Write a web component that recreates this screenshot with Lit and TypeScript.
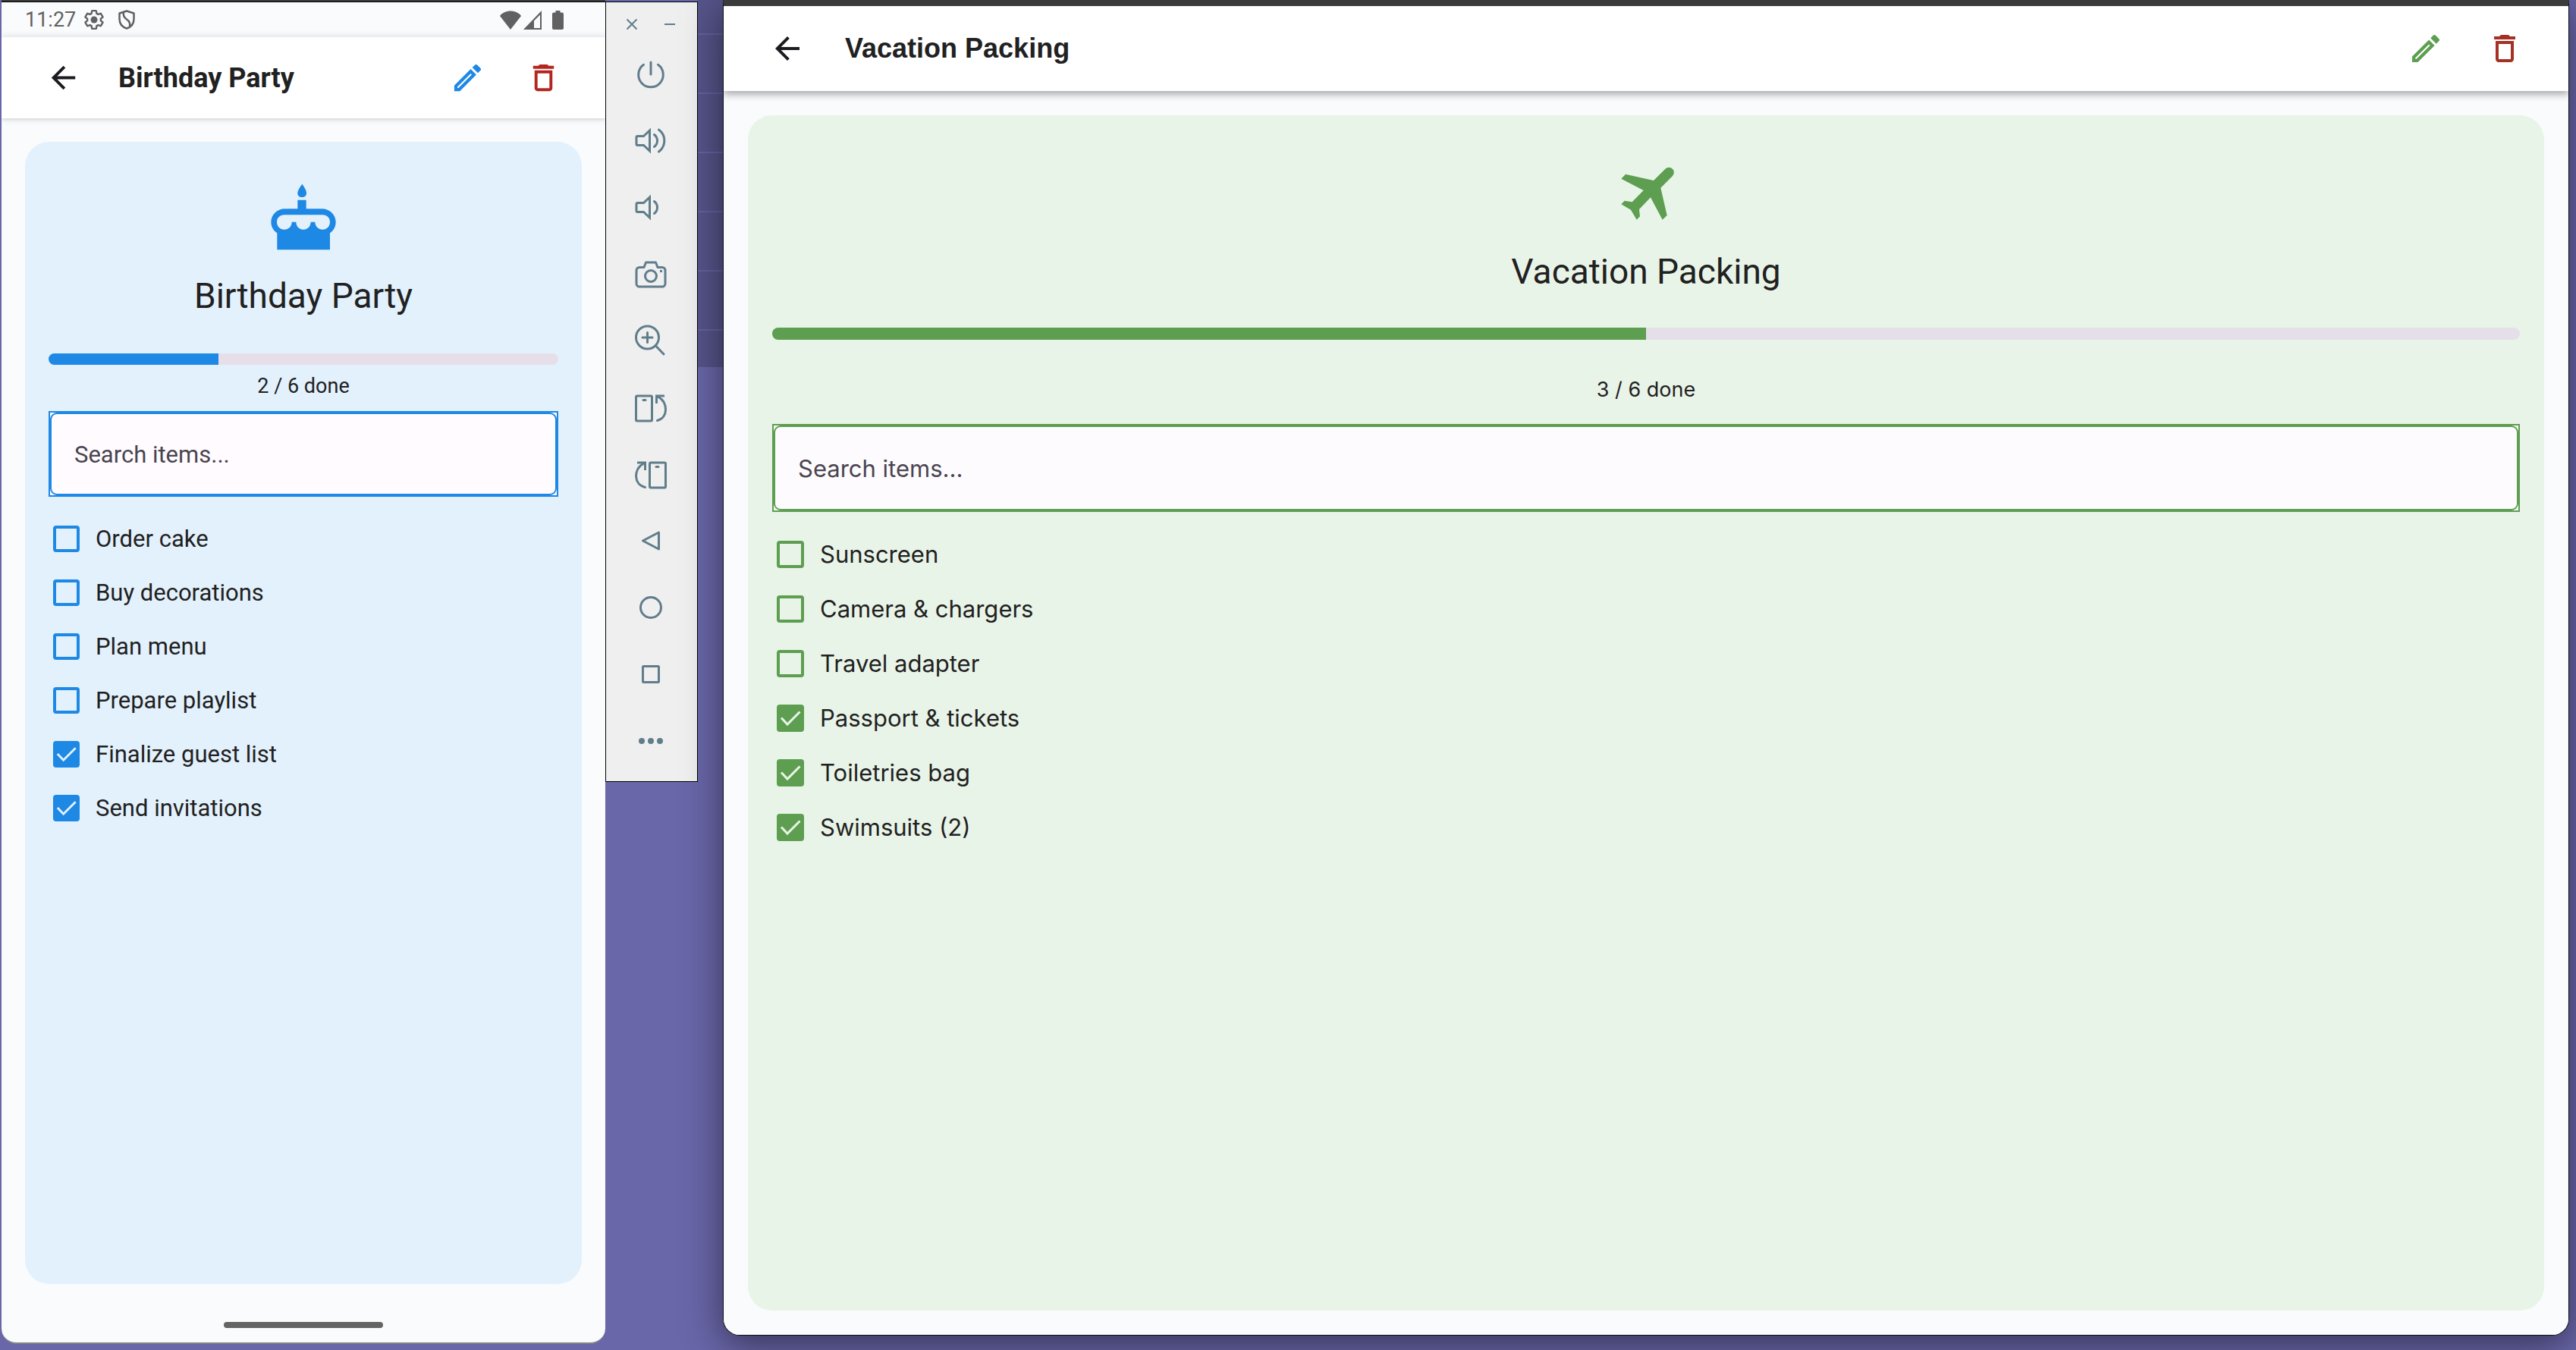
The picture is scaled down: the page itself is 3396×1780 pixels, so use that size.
import { LitElement, html, css, svg, nothing } from "lit";
import { customElement, property } from "lit/decorators.js";

interface Item {
  name: string;
  done: boolean;
}

const backIcon = svg`<path d="M20 11H7.83l5.59-5.59L12 4l-8 8 8 8 1.41-1.41L7.83 13H20v-2z" />`;
const editIcon = svg`<path d="M14.06 9.22l.72.72L5.82 18.9H5.1v-.72l8.96-8.96M17.66 3c-.25 0-.51.1-.7.29l-1.83 1.83 3.75 3.75 1.83-1.83c.39-.39.39-1.02 0-1.41l-2.34-2.34c-.2-.2-.45-.29-.71-.29zm-3.6 3.19L3 17.25V21h3.75L17.81 9.94l-3.75-3.75z" />`;
const deleteIcon = svg`<path d="M16 9v10H8V9h8m-1.5-6h-5l-1 1H5v2h14V4h-3.5l-1-1zM18 7H6v12c0 1.1.9 2 2 2h8c1.1 0 2-.9 2-2V7z" />`;

const cakeIcon = html`<svg class="cake" viewBox="45 19 270 270" aria-hidden="true">
  <path d="M175 24C184 36 192 50 192 60C192 70 185 76 174 76C164 76 157 70 157 60C157 50 166 36 175 24Z" />
  <path
    fill-rule="evenodd"
    d="M157 122V87H191V122H254C284 122 308 146 308 174C308 192 299 208 285 218V284H76V218C61 208 52 192 52 174C52 146 76 122 106 122ZM104 146C88 146 75 158 75 174C75 191 88 204 104 204C121 204 134 191 134 174H151C151 191 164 204 180 204C196 204 209 191 209 174H226C226 191 240 204 256 204C272 204 285 191 285 174C285 158 272 146 257 146Z"
  />
</svg>`;

const planeIcon = html`<svg class="plane" viewBox="546 118 228 216" aria-hidden="true">
  <path
    d="M579 150L690 175L736 129C744 121 757 121 765 129C772 136 772 149 765 157L718 204L743 313L725 330L678 242L633 289L636 317L623 330L600 291L562 269L575 255L605 260L650 214L562 168Z"
  />
</svg>`;

@customElement("checklist-screen")
class ChecklistScreen extends LitElement {
  static styles = css`
    :host {
      display: flex;
      flex-direction: column;
      flex: 1;
      color: #212121;
      background: #f9fbfd;
    }
    :host([theme="blue"]) {
      --accent: #1e88e5;
      --tint: #e3f1fd;
      --track: #e6dfea;
      --field: #fffbff;
      --font: Roboto, sans-serif;
      --title-font: Roboto, sans-serif;
      --gutter: 31px;
      --icon: 47px;
      --header: 107px;
      --edge: 58px;
      --title-gap: 49px;
      --action-gap: 53px;
      --hero-top: 54px;
      --name-top: 31px;
      --name-size: 46px;
      --bar-top: 48px;
      --bar: 15px;
      --count-top: 12px;
      --count-bottom: 17px;
      --search: 113px;
      --list-top: 20px;
      --row: 71px;
      --box: 35px;
      --header-shadow: 0 0 10px rgba(0, 0, 0, 0.14), 0 2px 4px rgba(0, 0, 0, 0.08);
    }
    :host([theme="green"]) {
      --accent: #5d9e51;
      --tint: #e9f4e8;
      --track: #e5dfea;
      --field: #fdfbfe;
      --font: Inter, sans-serif;
      --title-font: "Liberation Sans", Arial, sans-serif;
      --gutter: 32px;
      --icon: 48px;
      --header: 112px;
      --edge: 60px;
      --title-gap: 52px;
      --action-gap: 56px;
      --hero-top: 67px;
      --name-top: 39px;
      --name-size: 46px;
      --bar-top: 46px;
      --bar: 16px;
      --count-top: 50px;
      --count-bottom: 29px;
      --search: 116px;
      --list-top: 20px;
      --row: 72px;
      --box: 36px;
      --header-shadow: 0 4px 10px rgba(0, 0, 0, 0.35);
    }
    * {
      box-sizing: border-box;
    }
    .header {
      display: flex;
      align-items: center;
      height: var(--header);
      padding: 0 var(--edge);
      background: #fff;
      box-shadow: var(--header-shadow);
    }
    .header-title {
      flex: 1;
      margin: 0 0 0 var(--title-gap);
      font: 700 36px/44px var(--title-font);
    }
    .actions {
      display: flex;
      gap: var(--action-gap);
    }
    .icon-button {
      display: block;
      width: var(--icon);
      height: var(--icon);
      padding: 0;
      border: 0;
      background: none;
      color: #1d1b20;
      cursor: pointer;
    }
    .icon-button.edit {
      color: var(--accent);
    }
    .icon-button.delete {
      color: #b3261e;
    }
    :host([theme="green"]) .icon-button.delete {
      color: #a53125;
    }
    svg {
      display: block;
      fill: currentColor;
    }
    .icon-button svg {
      width: 100%;
      height: 100%;
    }
    .card {
      flex: 1;
      display: flex;
      flex-direction: column;
      margin: var(--gutter);
      padding: var(--hero-top) var(--gutter) var(--gutter);
      border-radius: 32px;
      background: var(--tint);
    }
    :host([theme="blue"]) .card {
      margin-bottom: 0;
    }
    .hero {
      display: flex;
      justify-content: center;
      color: var(--accent);
    }
    .cake {
      width: 90px;
      height: 90px;
    }
    .plane {
      width: 76px;
      height: 72px;
    }
    .name {
      margin: var(--name-top) 0 var(--bar-top);
      font: 400 var(--name-size) / 56px Roboto, sans-serif;
      text-align: center;
    }
    .bar {
      height: var(--bar);
      border-radius: 8px;
      overflow: hidden;
      background: var(--track);
    }
    .fill {
      height: 100%;
      background: var(--accent);
    }
    .count {
      margin: var(--count-top) 0 var(--count-bottom);
      font: 400 27px/32px var(--font);
      text-align: center;
    }
    .search {
      display: flex;
      height: var(--search);
      border: 2px solid var(--accent);
      background: var(--field);
    }
    .search-input {
      flex: 1;
      min-width: 0;
      padding: 2px 30px 0;
      border: 2px solid var(--accent);
      border-radius: 9px;
      outline: 0;
      background: var(--field);
      color: #212121;
      font: 400 31px/40px var(--font);
    }
    .search-input::placeholder {
      color: #49454f;
      opacity: 1;
    }
    .list {
      margin: var(--list-top) 0 0;
      padding: 0 0 0 6px;
      list-style: none;
    }
    .row {
      display: flex;
      align-items: center;
      gap: 21px;
      height: var(--row);
      font: 400 31px/40px var(--font);
    }
    .tick {
      display: grid;
      width: var(--box);
      height: var(--box);
    }
    .box,
    .mark {
      grid-area: 1 / 1;
      width: 100%;
      height: 100%;
    }
    .box {
      appearance: none;
      margin: 0;
      border: 4px solid var(--accent);
      border-radius: 4px;
    }
    .box:checked {
      background: var(--accent);
    }
    .mark {
      fill: none;
      stroke: var(--tint);
      stroke-width: 3;
      pointer-events: none;
    }
  `;

  @property() theme = "blue";
  @property() name = "";
  @property({ attribute: false }) items: Item[] = [];

  private action(kind: string, label: string, icon: unknown) {
    return html`<button class="icon-button ${kind}" type="button" aria-label=${label}>
      <svg viewBox="0 0 24 24" aria-hidden="true">${icon}</svg>
    </button>`;
  }

  render() {
    const done = this.items.filter((item) => item.done).length;
    const total = this.items.length;
    return html`
      <header class="header">
        ${this.action("back", "Back", backIcon)}
        <h1 class="header-title">${this.name}</h1>
        <div class="actions">
          ${this.action("edit", "Edit list", editIcon)} ${this.action("delete", "Delete list", deleteIcon)}
        </div>
      </header>
      <main class="card">
        <div class="hero">${this.theme === "blue" ? cakeIcon : planeIcon}</div>
        <h2 class="name">${this.name}</h2>
        <div
          class="bar"
          role="progressbar"
          aria-label="Items done"
          aria-valuemin="0"
          aria-valuemax=${total}
          aria-valuenow=${done}
        >
          <div class="fill" style="width:${(done / total) * 100}%"></div>
        </div>
        <p class="count">${done} / ${total} done</p>
        <div class="search">
          <input class="search-input" type="text" placeholder="Search items..." aria-label="Search items" />
        </div>
        <ul class="list">
          ${this.items.map(
            (item, i) => html`<li class="row">
              <span class="tick">
                <input class="box" type="checkbox" id="item-${i}" .checked=${item.done} />
                ${item.done
                  ? html`<svg class="mark" viewBox="0 0 36 36" aria-hidden="true"><path d="M6 17.5L14 26L30.5 9.5" /></svg>`
                  : nothing}
              </span>
              <label for="item-${i}">${item.name}</label>
            </li>`
          )}
        </ul>
      </main>
    `;
  }
}

@customElement("emulator-rail")
class EmulatorRail extends LitElement {
  static styles = css`
    :host {
      display: block;
      box-sizing: border-box;
      padding: 0 2px 9px 0;
      border: 1px solid #000;
      background: #efefef;
      color: #607d8b;
    }
    * {
      box-sizing: border-box;
    }
    .window-buttons {
      display: flex;
      justify-content: center;
      gap: 22px;
      height: 50px;
      padding-top: 15px;
    }
    .tools {
      display: flex;
      flex-direction: column;
      align-items: center;
    }
    button {
      display: grid;
      place-items: center;
      padding: 0;
      border: 0;
      background: none;
      color: inherit;
      cursor: pointer;
    }
    .small {
      width: 28px;
      height: 28px;
    }
    .tool {
      width: 100%;
      height: 88px;
    }
    svg {
      display: block;
      fill: none;
      stroke: currentColor;
      stroke-width: 3;
      stroke-linecap: round;
    }
    .small svg {
      width: 16px;
      height: 16px;
      stroke-width: 2;
      stroke-linecap: butt;
    }
    .tool svg {
      width: 48px;
      height: 48px;
    }
    .solid {
      fill: currentColor;
      stroke: none;
    }
  `;

  private tools: [string, unknown][] = [
    ["Power", svg`<path d="M14.5 12.3A16.3 16.3 0 1 0 33.5 12.3M24 9V25" />`],
    [
      "Volume up",
      svg`<path d="M5 20a1.500 1.500 0 0 1 1.500-1.500H14.500L22.500 11V38L14.500 30.500H6.500A1.500 1.500 0 0 1 5 29Z M28.500 16.500a10 10 0 0 1 0 16M34.500 10a18 18 0 0 1 0 29" />`,
    ],
    [
      "Volume down",
      svg`<path d="M5 20a1.500 1.500 0 0 1 1.500-1.500H14.500L22.500 11V38L14.500 30.500H6.500A1.500 1.500 0 0 1 5 29Z M28.500 16.500a10 10 0 0 1 0 16" />`,
    ],
    [
      "Take screenshot",
      svg`<path stroke-linejoin="round" d="M9 15.500h6l2.500-6.500h13L33 15.500h6a4 4 0 0 1 4 4V37a4 4 0 0 1-4 4H9a4 4 0 0 1-4-4V19.500a4 4 0 0 1 4-4Z" /><circle cx="24" cy="27" r="7.500" /><path class="solid" d="M36 19h3v3h-3z" />`,
    ],
    ["Zoom", svg`<circle cx="19.500" cy="20" r="15" /><path d="M19.500 13.500v13M13 20h13M31 31.500L41 42" />`],
    [
      "Rotate left",
      svg`<rect x="4.500" y="9" width="21" height="33" rx="1.500" /><path d="M14 14.500h3M32.500 41.500C47 38 47 17 34 10.500" /><path stroke-linecap="butt" d="M42 9H31.500V19" />`,
    ],
    [
      "Rotate right",
      svg`<rect x="22.500" y="9" width="21" height="33" rx="1.500" /><path d="M31 14.500h3M16.500 41.500C1 38 1 17 14 10.500" /><path stroke-linecap="butt" d="M6 9H16.500V19" />`,
    ],
    ["Back", svg`<path stroke-linejoin="round" d="M13.500 24L34.500 13V35Z" />`],
    ["Home", svg`<circle cx="24" cy="24" r="13.500" />`],
    ["Overview", svg`<rect x="13.500" y="13.500" width="21" height="21" rx="1" />`],
    [
      "More",
      svg`<g class="solid"><circle cx="12" cy="24" r="4" /><circle cx="24" cy="24" r="4" /><circle cx="36" cy="24" r="4" /></g>`,
    ],
  ];

  render() {
    return html`
      <div class="window-buttons">
        <button class="small" type="button" aria-label="Close">
          <svg viewBox="0 0 16 16" aria-hidden="true"><path d="M1.500 1.500l13 13M14.500 1.500l-13 13" /></svg>
        </button>
        <button class="small" type="button" aria-label="Minimize">
          <svg viewBox="0 0 16 16" aria-hidden="true"><path d="M1 8h14" /></svg>
        </button>
      </div>
      <div class="tools">
        ${this.tools.map(
          ([label, icon]) => html`<button class="tool" type="button" aria-label=${label}>
            <svg viewBox="0 0 48 48" aria-hidden="true">${icon}</svg>
          </button>`
        )}
      </div>
    `;
  }
}

@customElement("app-root")
class AppRoot extends LitElement {
  static styles = css`
    :host {
      display: block;
    }
    * {
      box-sizing: border-box;
    }
    .desktop {
      display: grid;
      grid-template-columns: minmax(0, 796fr) 122px 33px minmax(0, 2434fr);
      min-height: 100vh;
      padding: 0 9px 0 2px;
      overflow: hidden;
      background: #6966a9;
    }
    .phone {
      display: flex;
      flex-direction: column;
      margin-bottom: 8px;
      border-top: 2px solid #3b3b3b;
      border-bottom: 2px solid #858585;
      border-radius: 0 0 20px 20px;
      overflow: hidden;
      background: #f9fbfd;
    }
    .status {
      display: flex;
      align-items: center;
      height: 47px;
      padding: 0 55px 0 31px;
      border-top: 1px solid #000;
      color: #616161;
      font: 400 27px/32px Roboto, sans-serif;
    }
    .status svg {
      display: block;
      fill: currentColor;
    }
    .notices {
      display: flex;
      align-items: center;
      flex: 1;
      gap: 19px;
      margin-left: 11px;
    }
    .gear {
      width: 26px;
      height: 26px;
    }
    .shield {
      width: 22px;
      height: 26px;
    }
    .wifi {
      width: 28px;
      height: 25px;
    }
    .signal {
      width: 24px;
      height: 25px;
      margin: 0 14px 0 3px;
    }
    .battery {
      width: 15px;
      height: 25px;
    }
    .home-area {
      display: flex;
      justify-content: center;
      height: 77px;
      padding-top: 50px;
    }
    .home-bar {
      width: 210px;
      height: 8px;
      border-radius: 4px;
      background: #646464;
    }
    .rail {
      align-self: start;
      margin-top: 2px;
    }
    .wall {
      height: 484px;
      background: linear-gradient(#56548a 76px, #6562a0 76px) 0 -32px / 100% 78px;
    }
    .window {
      display: flex;
      flex-direction: column;
      margin-bottom: 19px;
      border: 1px solid #0c0c14;
      border-top: 8px solid #3b3b3b;
      border-radius: 0 0 22px 22px;
      overflow: hidden;
      background: #f9fbfd;
      box-shadow: 0 12px 50px rgba(0, 0, 0, 0.5);
    }
  `;

  private party: Item[] = [
    { name: "Order cake", done: false },
    { name: "Buy decorations", done: false },
    { name: "Plan menu", done: false },
    { name: "Prepare playlist", done: false },
    { name: "Finalize guest list", done: true },
    { name: "Send invitations", done: true },
  ];

  private packing: Item[] = [
    { name: "Sunscreen", done: false },
    { name: "Camera & chargers", done: false },
    { name: "Travel adapter", done: false },
    { name: "Passport & tickets", done: true },
    { name: "Toiletries bag", done: true },
    { name: "Swimsuits (2)", done: true },
  ];

  render() {
    return html`
      <div class="desktop">
        <section class="phone">
          <div class="status">
            <span>11:27</span>
            <div class="notices">
              <svg class="gear" viewBox="1 1 22 22" aria-hidden="true">
                <path
                  fill="none"
                  stroke="currentColor"
                  stroke-width="2"
                  d="M19.43 12.98c.04-.32.07-.64.07-.98s-.03-.66-.07-.98l2.11-1.65c.19-.15.24-.42.12-.64l-2-3.46c-.09-.16-.26-.25-.44-.25-.06 0-.12.01-.17.03l-2.49 1c-.52-.4-1.08-.73-1.69-.98l-.38-2.65C14.46 2.18 14.25 2 14 2h-4c-.25 0-.46.18-.49.42l-.38 2.65c-.61.25-1.17.59-1.69.98l-2.49-1c-.06-.02-.12-.03-.18-.03-.17 0-.34.09-.43.25l-2 3.46c-.13.22-.07.49.12.64l2.11 1.65c-.04.32-.07.65-.07.98s.03.66.07.98l-2.11 1.65c-.19.15-.24.42-.12.64l2 3.46c.09.16.26.25.44.25.06 0 .12-.01.17-.03l2.49-1c.52.4 1.08.73 1.69.98l.38 2.65c.03.24.24.42.49.42h4c.25 0 .46-.18.49-.42l.38-2.65c.61-.25 1.17-.59 1.69-.98l2.49 1c.06.02.12.03.18.03.17 0 .34-.09.43-.25l2-3.46c.12-.22.07-.49-.12-.64l-2.11-1.65z"
                />
                <circle cx="12" cy="12" r="3.800" />
              </svg>
              <svg class="shield" viewBox="0 0 22 26" aria-hidden="true">
                <path
                  fill="none"
                  stroke="currentColor"
                  stroke-width="2.500"
                  stroke-linejoin="round"
                  d="M11 1.500L20.500 4.500V12C20.500 18 17 22.500 11 24.500C5 22.500 1.500 18 1.500 12V4.500ZM7 3C6 8 8 10.500 11 12.500C15 15 16 18 15 22.500"
                />
              </svg>
            </div>
            <svg class="wifi" viewBox="0 0 28 25" aria-hidden="true">
              <path d="M14 25L0 7C3 3 8 .5 14 .5S25 3 28 7Z" />
            </svg>
            <svg class="signal" viewBox="0 0 24 25" aria-hidden="true">
              <path fill-rule="evenodd" d="M0 25L24 0V25ZM14 13.500V23H22V5.500Z" />
            </svg>
            <svg class="battery" viewBox="0 0 15 25" aria-hidden="true">
              <path d="M4.500 0h6v2.500H13a2 2 0 0 1 2 2V23a2 2 0 0 1-2 2H2a2 2 0 0 1-2-2V4.500a2 2 0 0 1 2-2h2.500Z" />
            </svg>
          </div>
          <checklist-screen theme="blue" name="Birthday Party" .items=${this.party}></checklist-screen>
          <div class="home-area"><div class="home-bar"></div></div>
        </section>
        <emulator-rail class="rail"></emulator-rail>
        <div class="wall"></div>
        <section class="window">
          <checklist-screen theme="green" name="Vacation Packing" .items=${this.packing}></checklist-screen>
        </section>
      </div>
    `;
  }
}
